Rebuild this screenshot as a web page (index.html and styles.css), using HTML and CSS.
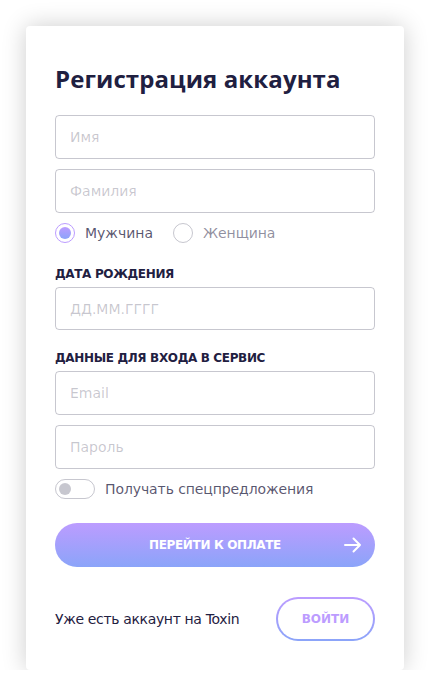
FILE: index.html
```html
<!DOCTYPE html>
<html lang="ru">
<head>
<meta charset="utf-8">
<link rel="stylesheet" href="styles.css">
</head>
<body>
<div class="card">
  <h1 class="title">Регистрация аккаунта</h1>
  <div class="field"><span class="ph">Имя</span></div>
  <div class="field gap"><span class="ph">Фамилия</span></div>
  <div class="radios">
    <label class="radio on"><span class="dot"></span><span class="rtext">Мужчина</span></label>
    <label class="radio"><span class="dot"></span><span class="rtext">Женщина</span></label>
  </div>
  <div class="label l1">Дата рождения</div>
  <div class="field"><span class="ph">ДД.ММ.ГГГГ</span></div>
  <div class="label l2">Данные для входа в сервис</div>
  <div class="field"><span class="ph">Email</span></div>
  <div class="field gap"><span class="ph">Пароль</span></div>
  <div class="toggle-row">
    <span class="toggle"><span class="knob"></span></span>
    <span class="ttext">Получать спецпредложения</span>
  </div>
  <div class="btn-main">
    <span>Перейти к оплате</span>
    <svg class="arrow" width="18" height="16" viewBox="0 0 18 16"><path d="M1 8H16M9.5 1.5L16 8L9.5 14.5" fill="none" stroke="#fff" stroke-width="2" stroke-linecap="round" stroke-linejoin="round"/></svg>
  </div>
  <div class="bottom">
    <span class="btext">Уже есть аккаунт на Toxin</span>
    <div class="btn-out"><span>Войти</span></div>
  </div>
</div>
</body>
</html>
```
FILE: styles.css
```css
html, body { margin: 0; padding: 0; background: #fff; }
body { font-family: "DejaVu Sans", "Noto Sans", sans-serif; color: rgba(31,32,65,0.75); }
.card {
  box-sizing: border-box;
  width: 378px;
  height: 644px;
  margin: 26px 0 0 26px;
  padding: 38px 29px 29px 29px;
  background: #fff;
  border-radius: 4px;
  box-shadow: 0 0 25px rgba(0,0,0,0.2);
  display: flex;
  flex-direction: column;
}
.title {
  margin: 0 0 21px 0;
  font-family: "Open Sans", sans-serif;
  font-weight: 700;
  font-size: 24px;
  line-height: 30px;
  color: #1f2041;
  letter-spacing: 0.1px;
}
.field {
  box-sizing: border-box;
  height: 44px;
  border: 1px solid rgba(31,32,65,0.25);
  border-radius: 4px;
  display: flex;
  align-items: center;
  padding-left: 14px;
}
.field.gap { margin-top: 10px; }
.ph { font-size: 14px; color: rgba(31,32,65,0.25); }
.radios { display: flex; gap: 20px; margin-top: 10px; height: 20px; }
.radio { display: flex; align-items: center; gap: 10px; }
.dot {
  box-sizing: border-box;
  width: 20px; height: 20px;
  border-radius: 50%;
  border: 1px solid rgba(31,32,65,0.25);
  display: flex; align-items: center; justify-content: center;
}
.radio.on .dot { border-color: #bc9cff; }
.radio.on .dot::after {
  content: ""; width: 12px; height: 12px; border-radius: 50%;
  background: linear-gradient(180deg, #bc9cff, #8ba4f9);
}
.rtext { font-size: 14px; line-height: 18px; }
.radio:not(.on) .rtext { color: rgba(31,32,65,0.5); letter-spacing: -0.1px; }
.label {
  font-size: 12px; font-weight: 700; text-transform: uppercase;
  color: #1f2041; line-height: 15px;
  letter-spacing: -0.35px;
  margin-bottom: 5px;
}
.l1 { margin-top: 24px; }
.l2 { margin-top: 21px; }
.toggle-row { display: flex; align-items: center; gap: 10px; margin-top: 10px; height: 20px; }
.toggle {
  box-sizing: border-box; width: 40px; height: 20px; border-radius: 10px;
  border: 1px solid rgba(31,32,65,0.25);
  display: flex; align-items: center; padding-left: 3px;
}
.knob { width: 12px; height: 12px; border-radius: 50%; background: rgba(31,32,65,0.25); }
.ttext { font-size: 14px; letter-spacing: -0.1px; }
.btn-main {
  margin-top: 24px;
  height: 44px;
  border-radius: 22px;
  background: linear-gradient(180deg, #bc9cff, #8ba4f9);
  display: flex; align-items: center; justify-content: center;
  position: relative;
  color: #fff; font-size: 12px; font-weight: 700; text-transform: uppercase;
  letter-spacing: -0.35px;
}
.arrow { position: absolute; right: 13px; top: 14px; }
.bottom { margin-top: 30px; display: flex; align-items: center; justify-content: space-between; }
.btext { font-size: 14px; color: #1f2041; letter-spacing: -0.35px; }
.btn-out {
  box-sizing: border-box; width: 99px; height: 44px; border-radius: 22px;
  border: 2px solid transparent;
  background: linear-gradient(#fff, #fff) padding-box, linear-gradient(180deg, #bc9cff, #8ba4f9) border-box;
  display: flex; align-items: center; justify-content: center;
  color: #bc9cff; font-size: 12px; font-weight: 700; text-transform: uppercase;
}
```
